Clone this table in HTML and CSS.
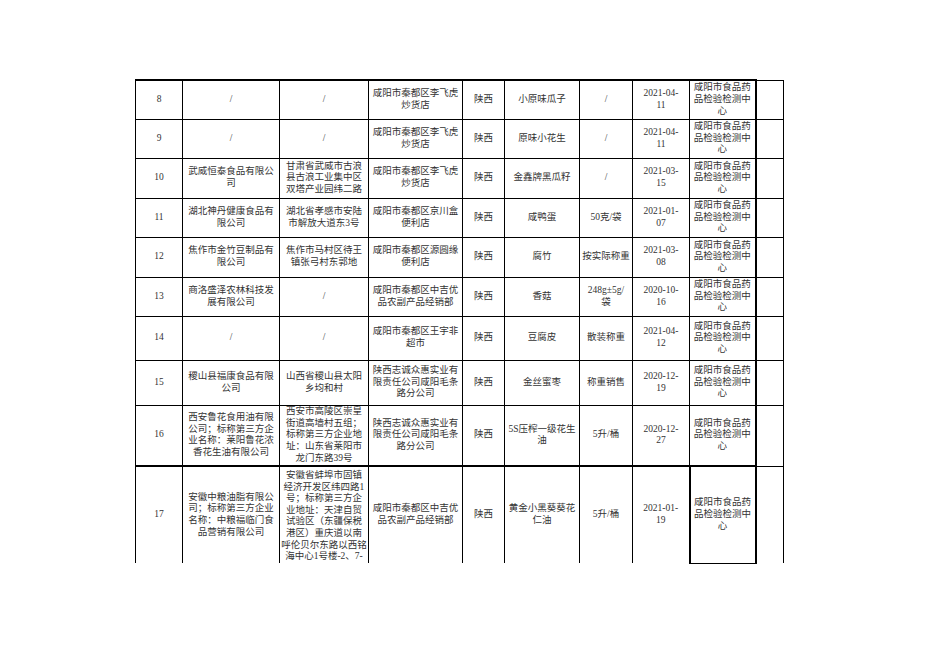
FILE: index.html
```html
<!DOCTYPE html>
<html lang="zh-CN">
<head>
<meta charset="utf-8">
<title>抽检信息</title>
<link rel="stylesheet" href="styles.css">
</head>
<body>
<div class="page">
  <div class="clip">
    <table class="sheet">
      <colgroup>
        <col class="c1"><col class="c2"><col class="c3"><col class="c4"><col class="c5">
        <col class="c6"><col class="c7"><col class="c8"><col class="c9"><col class="c10">
      </colgroup>
      <tbody>
        <tr class="r39 first">
          <td>8</td><td>/</td><td>/</td>
          <td>咸阳市秦都区李飞虎<br>炒货店</td><td>陕西</td><td>小原味瓜子</td><td>/</td>
          <td>2021-04-<br>11</td><td class="org">咸阳市食品药<br>品检验检测中<br>心</td><td class="blank"></td>
        </tr>
        <tr class="r39">
          <td>9</td><td>/</td><td>/</td>
          <td>咸阳市秦都区李飞虎<br>炒货店</td><td>陕西</td><td>原味小花生</td><td>/</td>
          <td>2021-04-<br>11</td><td class="org">咸阳市食品药<br>品检验检测中<br>心</td><td class="blank"></td>
        </tr>
        <tr class="r40">
          <td>10</td><td>武威恒泰食品有限公<br>司</td><td>甘肃省武威市古浪<br>县古浪工业集中区<br>双塔产业园纬二路</td>
          <td>咸阳市秦都区李飞虎<br>炒货店</td><td>陕西</td><td>金鑫牌黑瓜籽</td><td>/</td>
          <td>2021-03-<br>15</td><td class="org">咸阳市食品药<br>品检验检测中<br>心</td><td class="blank"></td>
        </tr>
        <tr class="r39">
          <td>11</td><td>湖北神丹健康食品有<br>限公司</td><td>湖北省孝感市安陆<br>市解放大道东3号</td>
          <td>咸阳市秦都区京川盒<br>便利店</td><td>陕西</td><td>咸鸭蛋</td><td>50克/袋</td>
          <td>2021-01-<br>07</td><td class="org">咸阳市食品药<br>品检验检测中<br>心</td><td class="blank"></td>
        </tr>
        <tr class="r40">
          <td>12</td><td>焦作市金竹豆制品有<br>限公司</td><td>焦作市马村区待王<br>镇张弓村东郭地</td>
          <td>咸阳市秦都区源圆缘<br>便利店</td><td>陕西</td><td>腐竹</td><td>按实际称重</td>
          <td>2021-03-<br>08</td><td class="org">咸阳市食品药<br>品检验检测中<br>心</td><td class="blank"></td>
        </tr>
        <tr class="r39">
          <td>13</td><td>商洛盛泽农林科技发<br>展有限公司</td><td>/</td>
          <td>咸阳市秦都区中吉优<br>品农副产品经销部</td><td>陕西</td><td>香菇</td><td>248g±5g/<br>袋</td>
          <td>2020-10-<br>16</td><td class="org">咸阳市食品药<br>品检验检测中<br>心</td><td class="blank"></td>
        </tr>
        <tr class="r44">
          <td>14</td><td>/</td><td>/</td>
          <td>咸阳市秦都区王宇非<br>超市</td><td>陕西</td><td>豆腐皮</td><td>散装称重</td>
          <td>2021-04-<br>12</td><td class="org">咸阳市食品药<br>品检验检测中<br>心</td><td class="blank"></td>
        </tr>
        <tr class="r45">
          <td>15</td><td>稷山县福康食品有限<br>公司</td><td>山西省稷山县太阳<br>乡均和村</td>
          <td>陕西志诚众惠实业有<br>限责任公司咸阳毛条<br>路分公司</td><td>陕西</td><td>金丝蜜枣</td><td>称重销售</td>
          <td>2020-12-<br>19</td><td class="org">咸阳市食品药<br>品检验检测中<br>心</td><td class="blank"></td>
        </tr>
        <tr class="r61">
          <td>16</td><td>西安鲁花食用油有限<br>公司；标称第三方企<br>业名称：莱阳鲁花浓<br>香花生油有限公司</td>
          <td>西安市高陵区崇皇<br>街道高墙村五组；<br>标称第三方企业地<br>址：山东省莱阳市<br>龙门东路39号</td>
          <td>陕西志诚众惠实业有<br>限责任公司咸阳毛条<br>路分公司</td><td>陕西</td><td>5S压榨一级花生<br>油</td><td>5升/桶</td>
          <td>2020-12-<br>27</td><td class="org">咸阳市食品药<br>品检验检测中<br>心</td><td class="blank"></td>
        </tr>
        <tr class="r97 last">
          <td>17</td><td>安徽中粮油脂有限公<br>司；标称第三方企业<br>名称：中粮福临门食<br>品营销有限公司</td>
          <td class="long"><div class="overflow">安徽省蚌埠市固镇<br>经济开发区纬四路1<br>号；标称第三方企<br>业地址：天津自贸<br>试验区（东疆保税<br>港区）重庆道以南<br>呼伦贝尔东路以西铭<br>海中心1号楼-2、7-<br>8</div></td>
          <td>咸阳市秦都区中吉优<br>品农副产品经销部</td><td>陕西</td><td>黄金小黑葵葵花<br>仁油</td><td>5升/桶</td>
          <td>2021-01-<br>19</td><td class="org">咸阳市食品药<br>品检验检测中<br>心</td><td class="blank"></td>
        </tr>
      </tbody>
    </table>
  </div>
</div>
</body>
</html>
```
FILE: styles.css
```css
html, body {
  margin: 0;
  padding: 0;
  background: #ffffff;
}

.page {
  width: 936px;
  height: 662px;
  padding: 79px 0 0 135px;
  box-sizing: border-box;
}

.clip {
  width: 652px;
  height: 486px;
  overflow: hidden;
}

.sheet {
  border-collapse: collapse;
  table-layout: fixed;
  width: 649px;
  font-family: "Liberation Serif", "Noto Sans CJK SC", serif;
  font-size: 9.5px;
  line-height: 11.6px;
  color: #333;
}

.c1 { width: 47px; }
.c2 { width: 97px; }
.c3 { width: 89px; }
.c4 { width: 94px; }
.c5 { width: 42px; }
.c6 { width: 75px; }
.c7 { width: 53px; }
.c8 { width: 57px; }
.c9 { width: 66px; }
.c10 { width: 28px; }

.sheet td {
  border: 1px solid #000;
  padding: 0 1px;
  text-align: center;
  vertical-align: middle;
  white-space: nowrap;
  overflow: hidden;
}

.sheet td.org {
  border-right: 2px solid #000;
}

.first td {
  border-top: 2px solid #000;
}

.first td.blank {
  border-top: 1px solid #000;
}

.r39 { height: 39px; }
.r40 { height: 40px; }
.r44 { height: 44px; }
.r45 { height: 45px; }
.r61 { height: 61px; }
.r97 { height: 97px; }

.last td {
  border-top: 2px solid #000;
  border-bottom: none;
}

.last td.blank {
  border-top: 1px solid #000;
}

.last td.org {
  border-left: 2px solid #000;
  border-bottom: 1px solid #000;
}

.sheet td.long {
  vertical-align: top;
}

.overflow {
  height: 96px;
  padding-top: 3px;
  box-sizing: border-box;
  overflow: hidden;
}
```
